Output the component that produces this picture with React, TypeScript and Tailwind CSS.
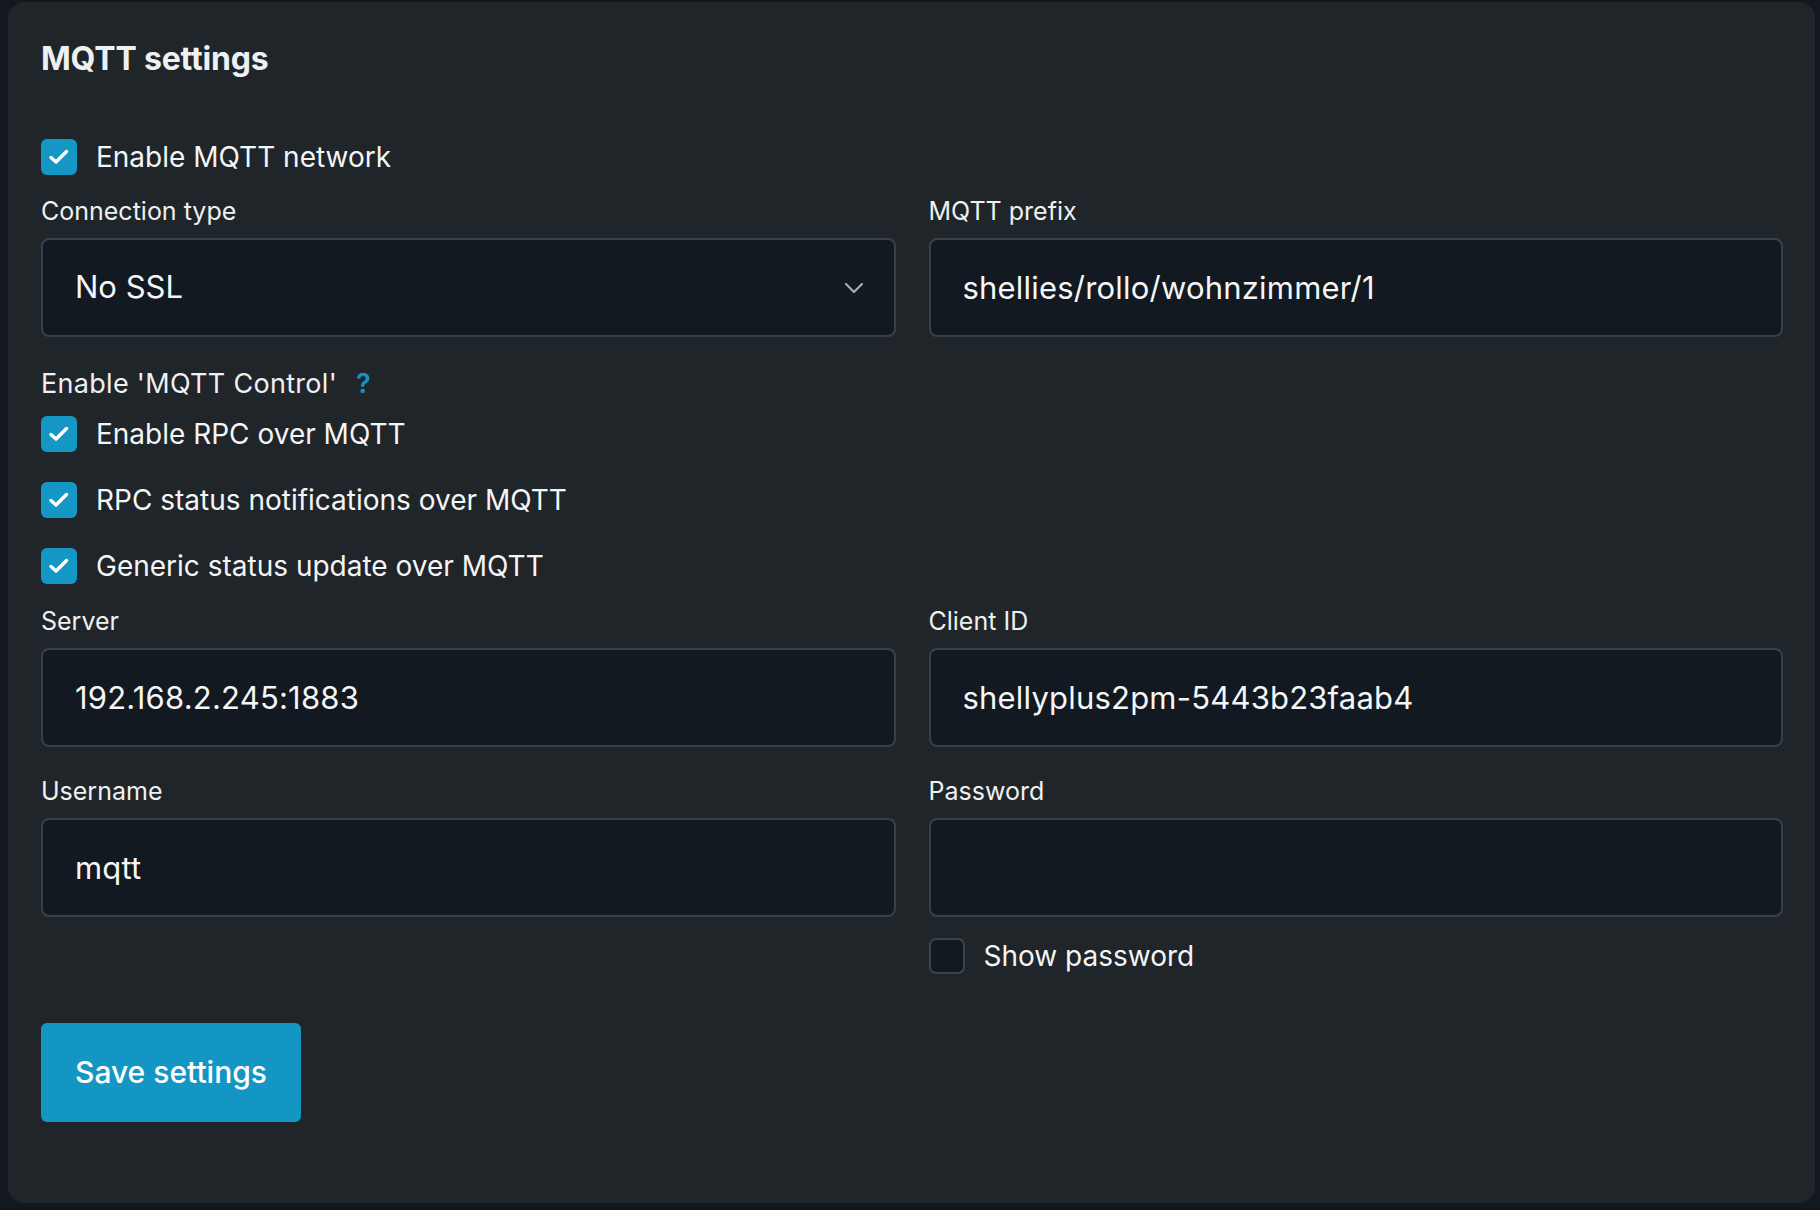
function Check({ checked }: { checked: boolean }) {
  if (!checked) {
    return (
      <div className="w-[36px] h-[36px] shrink-0 rounded-[7px] border-2 border-[#394451] bg-[#121920]" />
    );
  }
  return (
    <div className="w-[36px] h-[36px] shrink-0 rounded-[6px] bg-[#1497c5] flex items-center justify-center">
      <svg width="36" height="36" viewBox="0 0 36 36" fill="none">
        <path
          d="M10 18.5 L15 23 L25.5 12.5"
          stroke="white"
          strokeWidth="3.5"
          strokeLinecap="round"
          strokeLinejoin="round"
        />
      </svg>
    </div>
  );
}

function CheckRow({ label, checked = true }: { label: string; checked?: boolean }) {
  return (
    <div className="flex items-center gap-[19px] h-[36px]">
      <Check checked={checked} />
      <span className="text-[28px] leading-[36px] text-[#f4f5f6]">{label}</span>
    </div>
  );
}

function Label({ children }: { children: React.ReactNode }) {
  return <div className="text-[25px] leading-[32px] text-[#eef0f2]">{children}</div>;
}

function TextField({ value }: { value: string }) {
  return (
    <input
      readOnly
      value={value}
      className="mt-[11px] w-full h-[99px] rounded-[8px] border-2 border-[#36414d] bg-[#121920] px-[32px] text-[31px] tracking-[0.2px] text-[#f5f6f7] outline-none"
    />
  );
}

export default function App() {
  return (
    <div className="w-[1820px] h-[1210px] bg-[#12181d] pt-[2px] pl-[8px] pr-[5px] pb-[7px] font-['Inter','Noto_Sans',sans-serif]">
      <div className="h-full rounded-[16px] bg-[#1f2529] pt-[37px] pl-[33px] pr-[32px]">
        <h2 className="text-[32px] leading-[40px] font-bold tracking-[-0.2px] text-[#eef0f2]">MQTT settings</h2>

        <div className="mt-[60px]">
          <CheckRow label="Enable MQTT network" />
        </div>

        <div className="mt-[20px] grid grid-cols-2 gap-x-[33px]">
          <div>
            <Label>Connection type</Label>
            <div className="mt-[11px] h-[99px] rounded-[8px] border-2 border-[#36414d] bg-[#121920] pl-[32px] pr-[30px] flex items-center justify-between">
              <span className="text-[31px] text-[#f5f6f7]">No SSL</span>
              <svg width="20" height="12" viewBox="0 0 20 12" fill="none">
                <path d="M2 2 L10 10 L18 2" stroke="#a3adb7" strokeWidth="2.2" strokeLinecap="round" strokeLinejoin="round" />
              </svg>
            </div>
          </div>
          <div>
            <Label>MQTT prefix</Label>
            <TextField value="shellies/rollo/wohnzimmer/1" />
          </div>
        </div>

        <div className="mt-[31px] flex items-center">
          <span className="text-[27px] leading-[32px] tracking-[0.3px] text-[#eef0f2]">Enable 'MQTT Control'</span>
          <span className="ml-[19px] text-[27px] leading-[32px] font-semibold text-[#1592c8]">?</span>
        </div>

        <div className="mt-[16px] flex flex-col gap-[30px]">
          <CheckRow label="Enable RPC over MQTT" />
          <CheckRow label="RPC status notifications over MQTT" />
          <CheckRow label="Generic status update over MQTT" />
        </div>

        <div className="mt-[21px] grid grid-cols-2 gap-x-[33px]">
          <div>
            <Label>Server</Label>
            <TextField value="192.168.2.245:1883" />
          </div>
          <div>
            <Label>Client ID</Label>
            <TextField value="shellyplus2pm-5443b23faab4" />
          </div>
          <div className="mt-[28px]">
            <Label>Username</Label>
            <TextField value="mqtt" />
          </div>
          <div className="mt-[28px]">
            <Label>Password</Label>
            <TextField value="" />
            <div className="mt-[21px]">
              <CheckRow label="Show password" checked={false} />
            </div>
          </div>
        </div>

        <button className="mt-[49px] h-[99px] rounded-[6px] bg-[#1396c4] px-[34px] text-[30px] font-medium text-white">
          Save settings
        </button>
      </div>
    </div>
  );
}
